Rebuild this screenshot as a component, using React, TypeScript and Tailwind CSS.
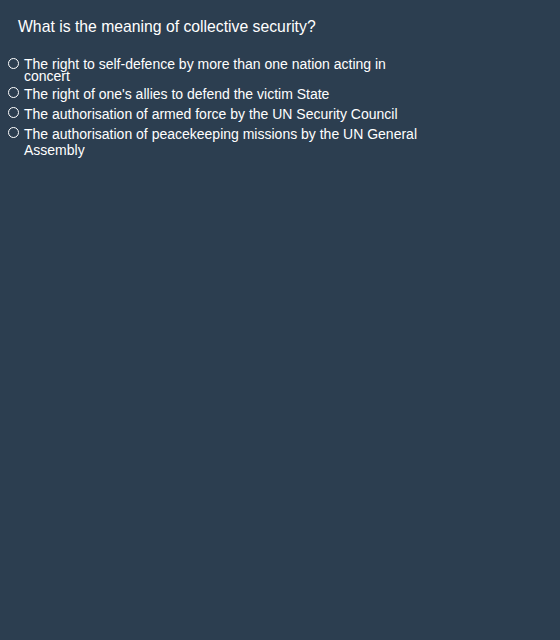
const options = [
  { text: "The right to self-defence by more than one nation acting in concert", lead: "leading-[12px]", dot: "mt-0" },
  { text: "The right of one's allies to defend the victim State", lead: "leading-[16px]", dot: "mt-[1px]" },
  { text: "The authorisation of armed force by the UN Security Council", lead: "leading-[16px]", dot: "mt-[1px]" },
  { text: "The authorisation of peacekeeping missions by the UN General Assembly", lead: "leading-[16px]", dot: "mt-[1px]" },
];

export default function App() {
  return (
    <div className="min-h-screen w-full bg-[#2c3e50] text-white font-['Liberation_Sans',Arial,sans-serif]">
      <div className="pt-[17px] pl-[18px]">
        <h1 className="text-[15.75px] leading-[20px]">What is the meaning of collective security?</h1>
      </div>
      <ul className="mt-[21px] pl-[8px] w-[430px] flex flex-col gap-[4px]">
        {options.map((o) => (
          <li key={o.text} className="flex items-start">
            <span className={`${o.dot} w-[11px] h-[11px] shrink-0 rounded-full border border-white`} />
            <span className={`ml-[5px] text-[14px] ${o.lead}`}>{o.text}</span>
          </li>
        ))}
      </ul>
    </div>
  );
}
